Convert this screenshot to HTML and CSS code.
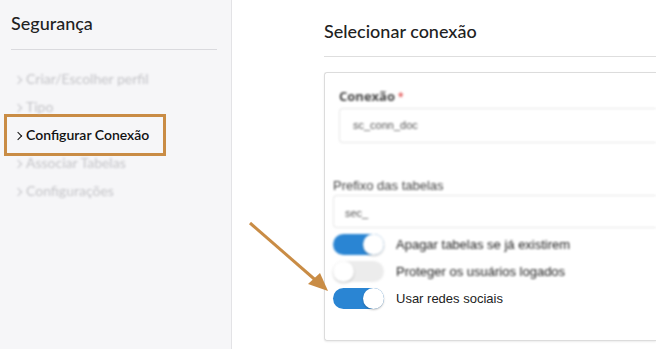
FILE: index.html
```html
<!DOCTYPE html>
<html lang="pt">
<head>
    <meta charset="UTF-8">
    <meta name="viewport" content="width=device-width, initial-scale=1.0">
    <title>Segurança</title>
    <link rel="stylesheet" href="styles.css">
</head>
<body>
    <div class="layout">
        <aside class="sidebar">
            <h1 class="side-title">Segurança</h1>
            <ul class="steps">
                <li class="step blur">Criar/Escolher perfil</li>
                <li class="step blur">Tipo</li>
                <li class="step active">Configurar Conexão</li>
                <li class="step blur">Associar Tabelas</li>
                <li class="step blur">Configurações</li>
            </ul>
        </aside>

        <main class="main">
            <h2 class="main-title">Selecionar conexão</h2>
            <div class="card">
                <div class="field field-conn blur">
                    <label class="label-bold">Conexão<span class="req">*</span></label>
                    <div class="input">sc_conn_doc</div>
                </div>
                <div class="field field-prefix blur">
                    <label class="label">Prefixo das tabelas</label>
                    <div class="input">sec_</div>
                </div>
                <div class="switch-row blur">
                    <span class="switch on"></span>
                    <span class="switch-text">Apagar tabelas se já existirem</span>
                </div>
                <div class="switch-row blur">
                    <span class="switch"></span>
                    <span class="switch-text">Proteger os usuários logados</span>
                </div>
                <div class="switch-row">
                    <span class="switch on"></span>
                    <span class="switch-text">Usar redes sociais</span>
                </div>
            </div>
        </main>
    </div>

    <svg class="arrow" width="90" height="80" viewBox="0 0 90 80">
        <line x1="2" y1="3" x2="72" y2="64" stroke="#c98c45" stroke-width="3"/>
        <polygon points="80,71 60,64 72,53" fill="#c98c45"/>
    </svg>
</body>
</html>
```

FILE: styles.css
```css
body {
    margin: 0;
    background-color: #fff;
    font-family: 'Lato', sans-serif;
    color: #222;
}
.layout {
    display: flex;
    height: 349px;
    overflow: hidden;
}
.blur {
    filter: blur(1.1px);
}

/* sidebar */
.sidebar {
    width: 232px;
    flex-shrink: 0;
    background-color: #f6f6f8;
    border-right: 1px solid #e3e3e6;
    padding: 0 14px 0 4px;
    box-sizing: border-box;
}
.side-title {
    font-size: 18px;
    font-weight: 500;
    margin: 0 0 0 7px;
    padding: 12px 0 15px;
    border-bottom: 1px solid #dadade;
    line-height: 22px;
}
.steps {
    list-style: none;
    margin: 0;
    padding: 15px 0 0;
}
.step {
    font-size: 14px;
    line-height: 28px;
    color: #c4c4c8;
    padding-left: 11px;
}
.step::before {
    content: '';
    display: inline-block;
    width: 5px;
    height: 5px;
    border-top: 1.6px solid currentColor;
    border-right: 1.6px solid currentColor;
    transform: rotate(45deg);
    margin: 0 5px 1px 0;
    vertical-align: middle;
}
.step.active {
    color: #111;
    font-weight: 600;
    border: 3px solid #c98c45;
    width: 148px;
    padding: 4px 0 4px 8px;
    margin: -7px 0;
}

/* main */
.main {
    flex: 1;
    padding-left: 92px;
}
.main-title {
    font-size: 18px;
    font-weight: 500;
    margin: 0;
    padding: 20px 0 14px;
    line-height: 22px;
    border-bottom: 1px solid #dedede;
}
.card {
    margin-top: 15px;
    height: 269px;
    border: 1px solid #dcdcdc;
    border-right: none;
    border-radius: 3px 0 0 3px;
    box-shadow: 0 1px 2px rgba(0, 0, 0, 0.08);
    box-sizing: border-box;
    padding: 14px 0 0 8px;
    font-family: 'Liberation Sans', Arial, sans-serif;
}
.field-conn {
    padding-left: 6px;
}
.label-bold {
    display: block;
    font-family: 'Open Sans', sans-serif;
    font-weight: bold;
    font-size: 13px;
    color: #444;
    line-height: 18px;
}
.req {
    color: #e35b5b;
    font-size: 10px;
    vertical-align: top;
    margin-left: 3px;
}
.input {
    height: 35px;
    border: 1px solid #e6e6e6;
    border-right: none;
    border-radius: 4px 0 0 4px;
    box-sizing: border-box;
    padding-left: 13px;
    line-height: 33px;
    font-size: 11px;
    color: #555;
}
.field-conn .input {
    margin-top: 3px;
}
.field-prefix {
    margin-top: 34px;
}
.label {
    display: block;
    font-size: 13px;
    color: #444;
    line-height: 18px;
}
.field-prefix .input {
    height: 33px;
    padding-left: 11px;
    line-height: 35px;
}
.switch-row {
    display: flex;
    align-items: center;
    gap: 12px;
    height: 21px;
    margin-top: 6px;
}
.switch-row + .switch-row {
    margin-top: 6px;
}
.switch {
    position: relative;
    width: 51px;
    height: 21px;
    border-radius: 11px;
    background-color: #ececec;
    flex-shrink: 0;
}
.switch::after {
    content: '';
    position: absolute;
    top: 0;
    left: 0;
    width: 21px;
    height: 21px;
    border-radius: 50%;
    background-color: #fff;
    box-shadow: 0 1px 2px rgba(0, 0, 0, 0.25);
}
.switch.on {
    background-color: #2a85d3;
}
.switch.on::after {
    left: 30px;
}
.switch-text {
    font-size: 13px;
    color: #222;
}

/* annotation arrow */
.arrow {
    position: absolute;
    left: 248px;
    top: 220px;
}
```
